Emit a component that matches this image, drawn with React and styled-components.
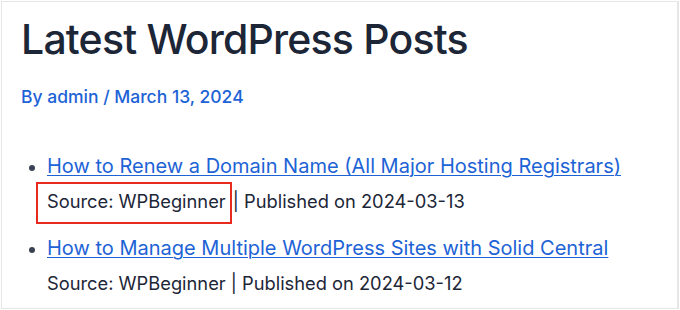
import React from 'react';
import styled, { createGlobalStyle } from 'styled-components';

const GlobalStyle = createGlobalStyle`
  html, body {
    margin: 0;
    padding: 0;
    background: #ffffff;
  }
  body {
    font-family: Inter, "Noto Sans", "Liberation Sans", sans-serif;
  }
`;

const Frame = styled.div`
  margin: 1px 0 0 1px;
  width: 678px;
  height: 308px;
  box-sizing: border-box;
  border: 1px solid #e6e6e6;
  border-right-width: 2px;
  padding: 13px 0 0 19px;
  overflow: hidden;
`;

const Title = styled.h1`
  margin: 0;
  font-size: 41px;
  font-weight: 500;
  line-height: 48px;
  color: #1c2637;
  letter-spacing: -0.8px;
`;

const Meta = styled.div`
  margin-top: 23px;
  font-size: 17.5px;
  font-weight: 500;
  color: #1d63d6;
  line-height: 22px;
`;

const PostList = styled.ul`
  margin: 45px 0 0;
  padding: 0 0 0 26px;
  list-style: disc;
  color: #1c2637;
`;

const PostItem = styled.li`
  font-size: 20px;
  line-height: 26px;
  margin-bottom: 22px;

  &::marker {
    color: #3a4252;
    font-size: 18px;
  }
`;

const PostLink = styled.a`
  color: #1d63d6;
  text-decoration: underline;
  text-underline-offset: 2px;
  text-decoration-thickness: 1px;
`;

const Details = styled.div`
  margin-top: 10px;
  color: #1c2637;
  font-size: 18.3px;
  line-height: 24px;
  white-space: pre;
`;

const Source = styled.span`
  ${(p) =>
    p.$highlight
      ? `
    margin: 0 -4px 0 -11px;
    padding: 6px 4px 10px 9px;
    border: 2px solid #e8291d;
  `
      : ''}
`;

const posts = [
  {
    title: 'How to Renew a Domain Name (All Major Hosting Registrars)',
    source: 'WPBeginner',
    date: '2024-03-13',
    highlight: true,
  },
  {
    title: 'How to Manage Multiple WordPress Sites with Solid Central',
    source: 'WPBeginner',
    date: '2024-03-12',
    highlight: false,
  },
];

export default function App() {
  return (
    <>
      <GlobalStyle />
      <Frame>
        <Title>Latest WordPress Posts</Title>
        <Meta>By admin / March 13, 2024</Meta>
        <PostList>
          {posts.map((post) => (
            <PostItem key={post.title}>
              <PostLink href="#">{post.title}</PostLink>
              <Details>
                <Source $highlight={post.highlight}>Source: {post.source}</Source>
                {' | '}Published on {post.date}
              </Details>
            </PostItem>
          ))}
        </PostList>
      </Frame>
    </>
  );
}
